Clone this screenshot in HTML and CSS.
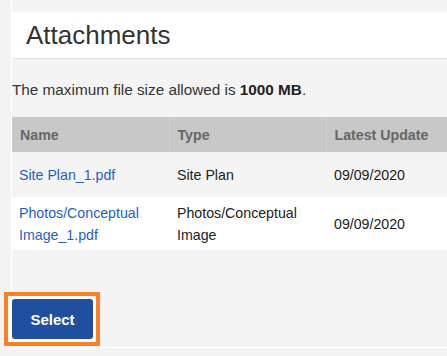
FILE: index.html
```html
<!DOCTYPE html>
<html lang="en">
<head>
    <meta charset="UTF-8">
    <meta name="viewport" content="width=device-width, initial-scale=1.0">
    <title>Attachments</title>
    <link rel="stylesheet" href="styles.css">
</head>
<body>
    <!-- Attachments panel -->
    <div class="panel">
        <div class="panel-header">
            <h1>Attachments</h1>
        </div>

        <p class="size-note">The maximum file size allowed is <strong>1000 MB</strong>.</p>

        <!-- List of uploaded files -->
        <table class="attachments-table">
            <thead>
                <tr>
                    <th class="col-name">Name</th>
                    <th class="col-type">Type</th>
                    <th>Latest Update</th>
                </tr>
            </thead>
            <tbody>
                <tr class="row-single">
                    <td><a href="#">Site Plan_1.pdf</a></td>
                    <td>Site Plan</td>
                    <td>09/09/2020</td>
                </tr>
                <tr class="row-double">
                    <td><a href="#">Photos/Conceptual Image_1.pdf</a></td>
                    <td>Photos/Conceptual Image</td>
                    <td>09/09/2020</td>
                </tr>
            </tbody>
        </table>

        <div class="actions">
            <!-- Focus frame round the button -->
            <span class="focus-frame">
                <button class="select-btn">Select</button>
            </span>
        </div>
    </div>
</body>
</html>
```

FILE: styles.css
```css
/* Page background */
body {
    margin: 0;
    background-color: #f4f4f4;
    font-family: "Liberation Sans", Arial, sans-serif;
    color: #333;
    overflow: hidden;
}

/* Panel with white left and bottom edges */
.panel {
    margin-left: 11px;
    padding-top: 12px;
    border-left: 1px solid #fff;
    border-bottom: 1px solid #fff;
    box-sizing: border-box;
    height: 348px;
}

/* Heading strip */
.panel-header {
    background-color: #fff;
    padding: 8px 14px;
    border-bottom: 1px solid #e2e2e2;
}

h1 {
    margin: 0;
    font-size: 26px;
    font-weight: 400;
    line-height: 30px;
    color: #333;
}

/* Max size note */
.size-note {
    margin: 22px 0 19px;
    font-size: 15.3px;
    line-height: 17px;
    color: #333;
}

.size-note strong {
    color: #222;
}

/* Table */
.attachments-table {
    border-collapse: collapse;
    width: 100%;
    font-size: 14.2px;
    table-layout: fixed;
}

.attachments-table th {
    background-color: #c8c8c8;
    color: #666;
    font-weight: 700;
    text-align: left;
    height: 35px;
    padding: 0 8px;
    border-left: 1px solid #d2d2d2;
}

.attachments-table th:first-child {
    border-left: none;
}

.col-name,
.col-type {
    width: 157px;
    box-sizing: border-box;
}

.attachments-table td {
    padding: 0 7px;
    line-height: 22px;
    vertical-align: middle;
    color: #222;
}

.attachments-table td + td {
    padding-left: 8px;
}

.attachments-table td:first-child {
    padding-right: 20px;
}

.row-single {
    height: 45px;
    background-color: #f4f4f4;
}

.row-double {
    height: 53px;
    background-color: #fff;
}

.attachments-table a {
    color: #1f5fc4;
    text-decoration: none;
}

/* Button area */
.actions {
    margin-top: 42px;
}

.focus-frame {
    display: inline-block;
    margin-left: -8px;
    padding: 3px 3px 3px 4px;
    background-color: #fff;
    border: 4px solid #ff7f27;
}

.select-btn {
    display: block;
    width: 81px;
    height: 40px;
    background-color: #1f4f9e;
    color: #fff;
    border: none;
    border-radius: 3px;
    font-family: "Liberation Sans", Arial, sans-serif;
    font-size: 15px;
    font-weight: 700;
    cursor: pointer;
}
```
